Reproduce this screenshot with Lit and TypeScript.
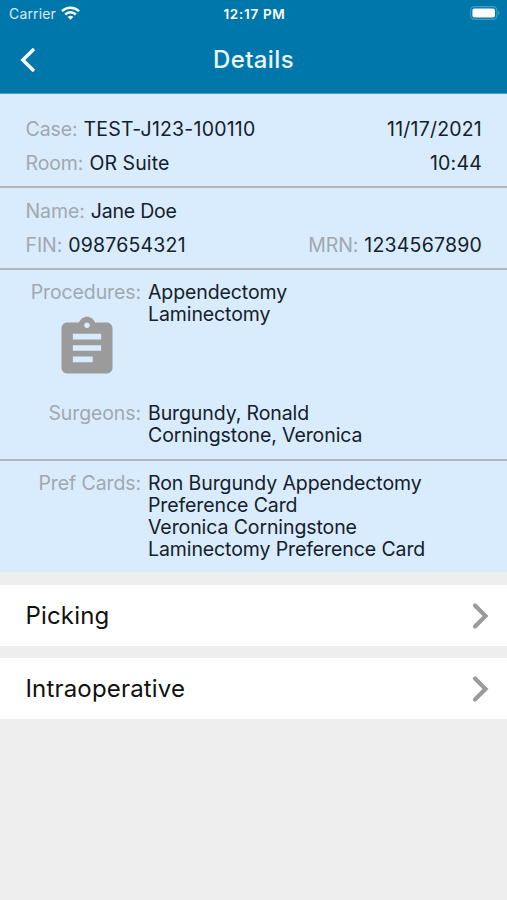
import { LitElement, html, css, svg } from "lit";
import { customElement, property } from "lit/decorators.js";

@customElement("status-bar")
class StatusBar extends LitElement {
  static styles = css`
    :host { display: grid; grid-template-columns: 1fr auto 1fr; align-items: center; height: 27px; padding: 0 7px 0 9px; color: #fff; font-size: 13px; }
    .carrier { display: flex; align-items: center; gap: 5px; color: #d9edf7; font-size: 14px; letter-spacing: 0.15px; }
    .time { font-weight: 600; font-size: 13.500px; letter-spacing: 0.7px; }
    .battery { justify-self: end; margin-top: -1px; }
    svg { display: block; }
    .wifi { margin-top: -1px; }
  `;
  render() {
    return html`
      <div class="carrier">
        <span>Carrier</span>
        <svg class="wifi" width="19" height="14" viewBox="0 0 19 14" fill="none" stroke="#fff" stroke-width="2.5">
          <path d="M1 5.2C5.7.6 13.300.6 18 5.200" />
          <path d="M4.200 8.500C7.200 5.600 11.800 5.600 14.800 8.500" />
          <path d="M9.500 13.700L6.700 10.900C8.300 9.500 10.700 9.500 12.300 10.900Z" fill="#fff" stroke="none" />
        </svg>
      </div>
      <span class="time">12:17 PM</span>
      <svg class="battery" width="30" height="14" viewBox="0 0 30 14">
        <rect x=".6" y=".6" width="26.300" height="12.800" rx="3.800" fill="none" stroke="#4a9bc1" stroke-width="1.100" />
        <rect x="2.400" y="2.400" width="22.600" height="9.200" rx="2" fill="#fff" />
        <path d="M28.200 5C29.900 5.500 29.900 8.500 28.200 9Z" fill="#4a9bc1" />
      </svg>
    `;
  }
}

@customElement("nav-header")
class NavHeader extends LitElement {
  static styles = css`
    :host { display: grid; grid-template-columns: 1fr auto 1fr; align-items: center; height: 65px; padding: 0 20px; color: #ecf7fd; }
    .title { font-size: 24px; font-weight: 500; letter-spacing: 0.4px; }
    svg { display: block; }
  `;
  render() {
    return html`
      <svg width="17" height="26" viewBox="0 0 17 26" fill="none" stroke="#fff" stroke-width="3.400">
        <path d="M14 2L2.800 13L14 24" />
      </svg>
      <span class="title">Details</span>
    `;
  }
}

@customElement("labelled-value")
class LabelledValue extends LitElement {
  @property() label = "";
  @property() value = "";
  static styles = css`
    :host { display: flex; gap: 6px; white-space: nowrap; }
    .label { color: #a1a8af; letter-spacing: -0.1px; }
    .value { letter-spacing: -0.2px; }
    :host([numeric]) .value { letter-spacing: 0.2px; }
    :host([spaced]) .value { letter-spacing: 0.1px; }
  `;
  render() {
    return html`${this.label ? html`<span class="label">${this.label}:</span>` : ""}<span class="value">${this.value}</span>`;
  }
}

@customElement("action-row")
class ActionRow extends LitElement {
  @property() label = "";
  static styles = css`
    :host { display: flex; align-items: center; justify-content: space-between; height: 61px; padding: 0 18px 0 25.500px; background: #fff; color: #111; font-size: 24px; letter-spacing: 0.17px; }
    svg { display: block; }
  `;
  render() {
    return html`
      <span>${this.label}</span>
      <svg width="18" height="28" viewBox="0 0 18 28" fill="none" stroke="#9b9b9b" stroke-width="4.200" stroke-linecap="round" stroke-linejoin="miter">
        <path d="M4 3.500L14.500 14L4 24.500" />
      </svg>
    `;
  }
}

const clipboard = svg`<path d="M19 3h-4.180C14.400 1.840 13.300 1 12 1c-1.300 0-2.400.84-2.820 2H5c-1.100 0-2 .9-2 2v14c0 1.100.9 2 2 2h14c1.100 0 2-.9 2-2V5c0-1.100-.9-2-2-2zm-7 0c.55 0 1 .45 1 1s-.45 1-1 1-1-.45-1-1 .45-1 1-1zm2 14H7v-2h7v2zm3-4H7v-2h10v2zm0-4H7V7h10v2z" />`;

@customElement("app-root")
class AppRoot extends LitElement {
  static styles = css`
    :host { display: block; min-height: 900px; background: #eee; font-family: Inter, "Liberation Sans", sans-serif; color: #14202a; }
    .top { height: 93px; background: #0077ab; border-bottom: 1px solid #4b9fc6; }
    .details { background: #d9ecfe; height: 478px; font-size: 19.500px; line-height: 22px; letter-spacing: -0.1px; }
    .block { border-bottom: 2px solid #afb5ba; padding: 0 25px 0 25.500px; box-sizing: border-box; }
    .case { height: 94px; padding-top: 24px; }
    .patient { height: 82px; padding-top: 12px; }
    .team { height: 191px; padding-top: 11px; }
    .cards { height: 111px; padding-top: 11px; border: 0; }
    .row { display: flex; justify-content: space-between; height: 34px; }
    .list { display: grid; grid-template-columns: 115.500px 1fr; column-gap: 7px; }
    .procedures { height: 121px; }
    .label { color: #a1a8af; text-align: right; }
    .icon { display: block; fill: #9b9b9b; margin: 10.500px 0 0 27px; }
    .actions { display: grid; gap: 12px; margin-top: 13px; }
  `;
  render() {
    return html`
      <div class="top"><status-bar></status-bar><nav-header></nav-header></div>
      <div class="details">
        <div class="block case">
          <div class="row"><labelled-value numeric label="Case" value="TEST-J123-100110"></labelled-value><labelled-value numeric value="11/17/2021"></labelled-value></div>
          <div class="row"><labelled-value spaced label="Room" value="OR Suite"></labelled-value><labelled-value numeric value="10:44"></labelled-value></div>
        </div>
        <div class="block patient">
          <div class="row"><labelled-value label="Name" value="Jane Doe"></labelled-value></div>
          <div class="row"><labelled-value numeric label="FIN" value="0987654321"></labelled-value><labelled-value numeric label="MRN" value="1234567890"></labelled-value></div>
        </div>
        <div class="block team">
          <div class="list procedures">
            <div><div class="label">Procedures:</div><svg class="icon" width="68" height="68" viewBox="0 0 24 24">${clipboard}</svg></div>
            <div>Appendectomy<br />Laminectomy</div>
          </div>
          <div class="list"><div class="label">Surgeons:</div><div>Burgundy, Ronald<br />Corningstone, Veronica</div></div>
        </div>
        <div class="block cards">
          <div class="list"><div class="label">Pref Cards:</div><div>Ron Burgundy Appendectomy<br />Preference Card<br />Veronica Corningstone<br />Laminectomy Preference Card</div></div>
        </div>
      </div>
      <div class="actions"><action-row label="Picking"></action-row><action-row label="Intraoperative"></action-row></div>
    `;
  }
}
